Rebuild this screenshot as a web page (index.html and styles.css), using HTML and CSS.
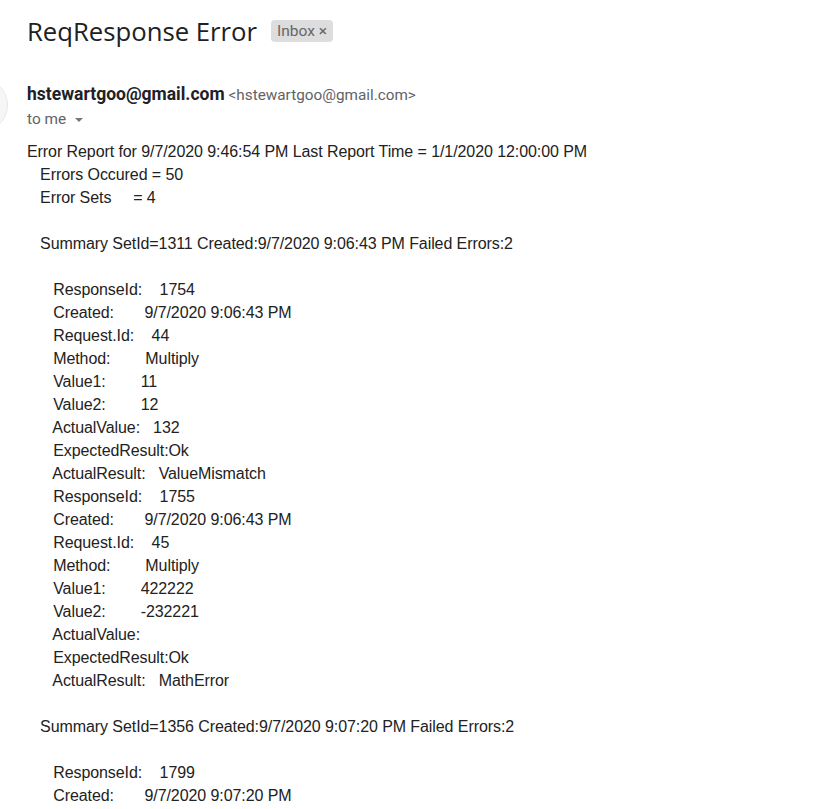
FILE: index.html
```html
<!DOCTYPE html>
<html>
<head>
<meta charset="utf-8">
<link rel="stylesheet" href="styles.css">
</head>
<body>
<div class="page">
  <div class="subject-row">
    <h1 class="subject">ReqResponse Error</h1>
    <span class="label">Inbox <span class="label-x">×</span></span>
  </div>
  <div class="sender-row">
    <div class="avatar"></div>
    <div class="sender-info">
      <div class="from"><span class="name">hstewartgoo@gmail.com</span> <span class="addr">&lt;hstewartgoo@gmail.com&gt;</span></div>
      <div class="to">to me <span class="caret"></span></div>
    </div>
  </div>
  <div class="body">Error Report for 9/7/2020 9:46:54 PM Last Report Time = 1/1/2020 12:00:00 PM
   Errors Occured = 50
   Error Sets     = 4

   Summary SetId=1311 Created:9/7/2020 9:06:43 PM Failed Errors:2

      ResponseId:    1754
      Created:       9/7/2020 9:06:43 PM
      Request.Id:    44
      Method:        Multiply
      Value1:        11
      Value2:        12
      ActualValue:   132
      ExpectedResult:Ok
      ActualResult:   ValueMismatch
      ResponseId:    1755
      Created:       9/7/2020 9:06:43 PM
      Request.Id:    45
      Method:        Multiply
      Value1:        422222
      Value2:        -232221
      ActualValue:
      ExpectedResult:Ok
      ActualResult:   MathError

   Summary SetId=1356 Created:9/7/2020 9:07:20 PM Failed Errors:2

      ResponseId:    1799
      Created:       9/7/2020 9:07:20 PM</div>
</div>
</body>
</html>
```
FILE: styles.css
```css
html, body {
  margin: 0;
  padding: 0;
  background: #fff;
  overflow: hidden;
}
.page {
  padding: 0 0 0 27px;
}
.subject-row {
  display: flex;
  align-items: center;
  height: 62px;
}
.subject {
  margin: 0;
  font-family: "Open Sans", sans-serif;
  font-weight: 400;
  font-size: 25.7px;
  color: #202124;
}
.label {
  margin-left: 14px;
  background: #dddddd;
  color: #666;
  font-family: Roboto, Arial, sans-serif;
  font-size: 15.5px;
  padding: 2px 6px;
  border-radius: 4px;
  line-height: 18px;
}
.sender-row {
  display: flex;
  margin-top: 16px;
}
.avatar {
  width: 52px;
  height: 52px;
  border-radius: 50%;
  background: #f6f6f6;
  border: 1px solid #e8e8e8;
  margin-left: -73px;
  margin-right: 19px;
  flex: none;
}
.sender-info {
  font-family: Roboto, Arial, sans-serif;
}
.from {
  line-height: 20px;
  padding-top: 6px;
}
.name {
  font-weight: 700;
  font-size: 17.5px;
  color: #202124;
}
.addr {
  font-size: 15.3px;
  color: #5f6368;
}
.to {
  margin-top: 4px;
  font-size: 15.4px;
  color: #5f6368;
  line-height: 20px;
}
.caret {
  display: inline-block;
  width: 0;
  height: 0;
  border-left: 4px solid transparent;
  border-right: 4px solid transparent;
  border-top: 4px solid #777;
  margin-left: 5px;
  vertical-align: middle;
}
.body {
  margin-top: 8px;
  white-space: pre;
  font-family: "Liberation Sans", Arial, sans-serif;
  font-size: 16px;
  letter-spacing: -0.08px;
  line-height: 23px;
  color: #222;
}
```
